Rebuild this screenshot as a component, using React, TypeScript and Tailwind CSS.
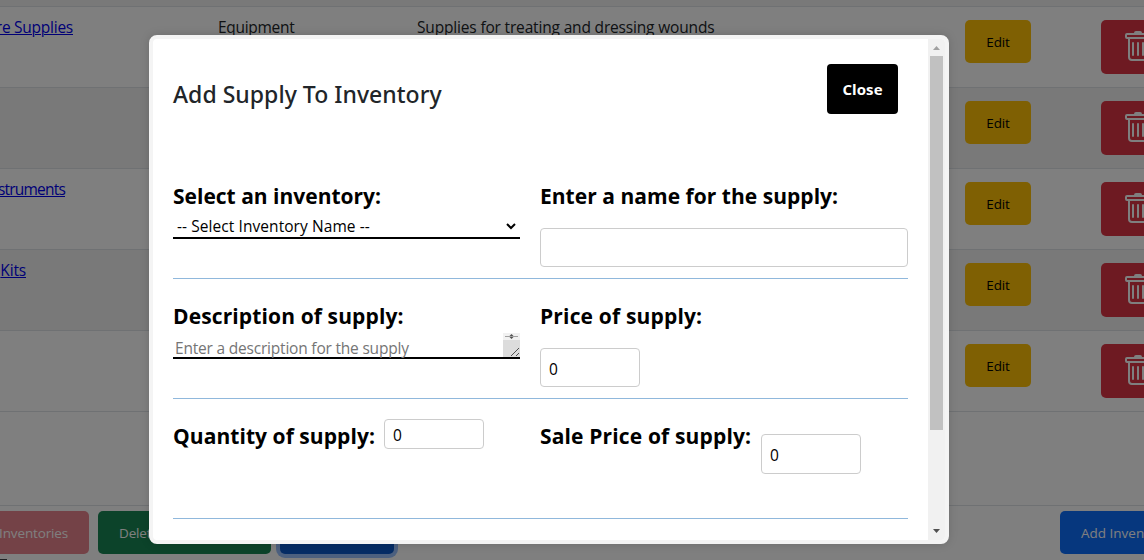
import type { ReactNode } from "react";
import { BsTrash } from "react-icons/bs";

type Row = { name: string; nameWidth: string; category: string; description: string; striped: boolean };

const rows: Row[] = [
  { name: "re Supplies", nameWidth: "w-[73px] tracking-[-0.25px]", category: "Equipment", description: "Supplies for treating and dressing wounds", striped: false },
  { name: "", nameWidth: "w-[73px]", category: "", description: "", striped: true },
  { name: "struments", nameWidth: "w-[65px] tracking-[-0.8px]", category: "", description: "", striped: false },
  { name: "Kits", nameWidth: "w-[26px]", category: "", description: "", striped: true },
  { name: "", nameWidth: "w-[73px]", category: "", description: "", striped: false },
];

function InventoryRow({ row }: { row: Row }) {
  return (
    <div className={`flex h-[81px] shrink-0 items-start border-b border-[#dee2e6] ${row.striped ? "bg-[#f2f2f2]" : "bg-white"}`}>
      <div className="w-[218px] shrink-0 pt-2">
        <div className={`flex justify-end whitespace-nowrap ${row.nameWidth}`}>
          {row.name && <a className="text-[#0000ee] underline decoration-1 underline-offset-1">{row.name}</a>}
        </div>
      </div>
      <div className="w-[199px] shrink-0 pt-2 tracking-[-0.3px]">{row.category}</div>
      <div className="w-[548px] shrink-0 pt-2 whitespace-nowrap">{row.description}</div>
      <div className="w-[136px] shrink-0 pt-[13px]">
        <button className="h-[43px] w-[66px] rounded-[5px] bg-[#ffc107] text-[13.5px] tracking-[-0.15px] text-black">Edit</button>
      </div>
      <button className="mt-[13px] h-[54px] w-[75px] shrink-0 rounded-[5px] bg-[#dc3545] pl-[21px] text-white">
        <BsTrash size={32} />
      </button>
    </div>
  );
}

function Label({ children, className = "" }: { children: ReactNode; className?: string }) {
  return <label className={`block h-[33px] shrink-0 text-[21px] leading-[35px] font-bold whitespace-nowrap text-black ${className}`}>{children}</label>;
}

function NumberBox({ className }: { className: string }) {
  return <div className={`flex w-[100px] shrink-0 items-center rounded border border-[#ccc] pl-2 text-black ${className}`}>0</div>;
}

function Section({ children }: { children: ReactNode }) {
  return <div className="flex h-[120px] shrink-0 gap-5 border-b border-[#90b8dc] pt-5">{children}</div>;
}

function Scrollbar() {
  return (
    <div className="flex w-[17px] shrink-0 flex-col items-center bg-[#f1f1f1]">
      <svg className="h-[17px] w-[17px] shrink-0" viewBox="0 0 17 17">
        <path d="M5 11 8.5 7 12 11Z" fill="#a0a0a0" />
      </svg>
      <div className="h-[374px] w-[13px] shrink-0 bg-[#c1c1c1]" />
      <div className="flex-1" />
      <svg className="h-[17px] w-[17px] shrink-0" viewBox="0 0 17 17">
        <path d="M5 6 8.5 10 12 6Z" fill="#505050" />
      </svg>
    </div>
  );
}

function SupplyModal() {
  return (
    <div className="absolute top-[35px] left-[149px] flex h-[509px] w-[800px] overflow-hidden rounded-lg border-4 border-[#f4f4f4] bg-white shadow-[0_0_10px_rgba(0,0,0,0.15)]">
      <div className="flex min-w-0 flex-1 flex-col pr-5 pl-5">
        <div className="flex h-[120px] shrink-0 items-start justify-between pr-[10px]">
          <h2 className="pt-[39px] font-['Noto_Sans',sans-serif] text-[23px] leading-[32px] font-medium tracking-[0.03px] text-[#212529]">Add Supply To Inventory</h2>
          <button className="mt-[25px] h-[50px] w-[71px] rounded bg-black text-[15px] font-bold tracking-[0.1px] text-white">Close</button>
        </div>
        <Section>
          <div className="w-[347px]">
            <Label className="tracking-normal">Select an inventory:</Label>
            <div className="flex h-[27px] items-center justify-between border-b-2 border-black pr-1 pl-1 tracking-[0.07px] text-black">
              <span className="pt-[2px]">-- Select Inventory Name --</span>
              <svg className="h-3 w-[10px]" viewBox="0 0 10 12">
                <path d="M1 5 5 9 9 5" fill="none" stroke="#000" strokeWidth="2" />
              </svg>
            </div>
          </div>
          <div className="w-[368px]">
            <Label className="tracking-[0.03px]">Enter a name for the supply:</Label>
            <div className="mt-4 h-[39px] rounded border border-[#ccc]" />
          </div>
        </Section>
        <Section>
          <div className="w-[347px]">
            <Label className="tracking-[0.12px]">Description of supply:</Label>
            <div className="flex h-[27px] items-end justify-between border-b-2 border-black pl-[2px] tracking-[-0.2px] text-[#757575]">
              <span className="h-[22px] leading-[26px]">Enter a description for the supply</span>
              <svg className="h-6 w-[17px]" viewBox="0 0 17 24">
                <path d="M0 0H17V7H0Z" fill="#f1f1f1" />
                <path d="M0 7H17V24H0Z" fill="#dcdcdc" />
                <path d="M2 3.5H15" stroke="#a0a0a0" />
                <path d="M6.5 3 8.5 1 10.5 3ZM6.5 4 8.5 6 10.5 4Z" fill="#505050" />
                <path d="M8 23 16 15M13 23 16 20" stroke="#505050" />
              </svg>
            </div>
          </div>
          <div>
            <Label className="tracking-[0.17px]">Price of supply:</Label>
            <NumberBox className="mt-4 h-[39px] pt-[2px]" />
          </div>
        </Section>
        <Section>
          <div className="flex w-[347px] items-start">
            <Label className="w-[211px] tracking-[0.06px]">Quantity of supply:</Label>
            <NumberBox className="h-[30px] pt-px" />
          </div>
          <div className="flex items-start">
            <Label className="w-[221px] tracking-[0.15px]">Sale Price of supply:</Label>
            <NumberBox className="mt-[15px] h-[40px] pt-px" />
          </div>
        </Section>
      </div>
      <Scrollbar />
    </div>
  );
}

export default function App() {
  return (
    <div className="relative h-[560px] w-[1144px] overflow-hidden bg-white font-['Open_Sans','Noto_Sans',sans-serif] text-[15.5px] leading-6 tracking-[-0.17px] text-[#212529]">
      <div className="flex h-full flex-col">
        <div className="h-[7px] shrink-0 border-b border-[#dee2e6] bg-[#f2f2f2]" />
        {rows.map((row, i) => (
          <InventoryRow key={i} row={row} />
        ))}
        <div className="h-[94px] shrink-0 border-b border-[#dee2e6]" />
        <div className="flex h-[48px] shrink-0 items-end text-[13.5px] tracking-[-0.15px] whitespace-nowrap text-white">
          <button className="flex h-[43px] w-[89px] shrink-0 items-center justify-end rounded-r-[5px] bg-[#e8848e] pr-[21px]">Inventories</button>
          <button className="ml-[9px] h-[43px] w-[173px] shrink-0 rounded-[5px] bg-[#198754] pl-[21px] text-left">Delete</button>
          <button className="ml-[9px] h-[43px] w-[114px] shrink-0 rounded-[5px] bg-[#0a58ca] shadow-[0_0_0_4px_rgba(49,132,253,0.5)]" />
          <button className="ml-auto h-[43px] w-[84px] shrink-0 overflow-hidden rounded-l-[5px] bg-[#0d6efd] pl-[21px] text-left tracking-normal">Add Inven</button>
        </div>
        <div className="mt-[5px] h-px w-[7px] shrink-0 bg-[#404448]" />
      </div>
      <div className="absolute inset-0 bg-black/50" />
      <SupplyModal />
    </div>
  );
}
